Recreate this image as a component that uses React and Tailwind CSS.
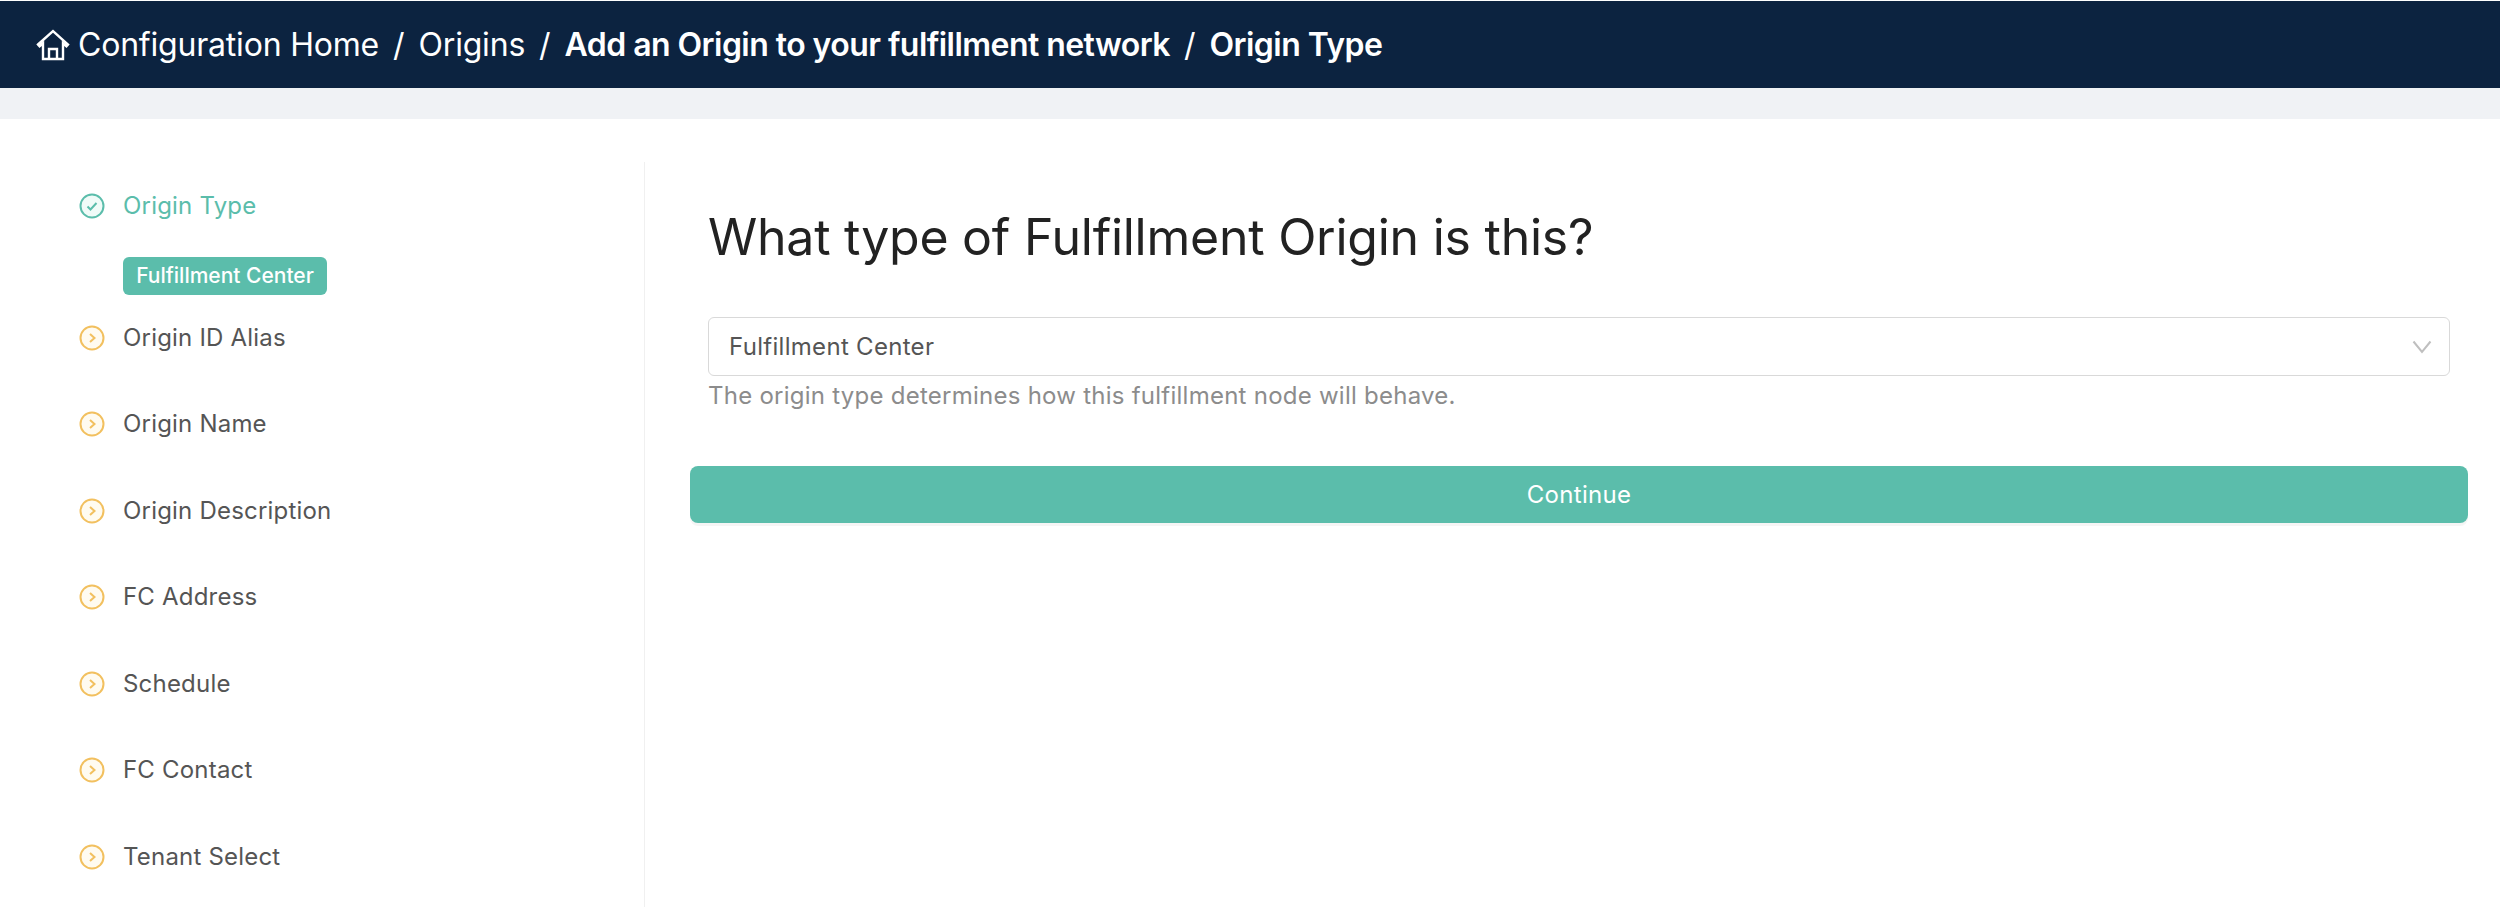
import React from 'react';

const FONT = 'font-["Inter",sans-serif]';

const STEPS = ['Origin ID Alias', 'Origin Name', 'Origin Description', 'FC Address', 'Schedule', 'FC Contact', 'Tenant Select'];

const HomeIcon = () => (
  <svg width="34" height="32" viewBox="0 0 34 32" fill="none" stroke="#fff" strokeWidth="2.4" strokeLinejoin="miter">
    <path d="M2 15.5 17 2l15 13.5-1.6 1.8-3.4-3V30H7V14.300l-3.400 3z" />
    <path d="M13 30V20h8v10" />
  </svg>
);

const StepIcon = ({ done }) => (
  <svg width="26" height="26" viewBox="0 0 26 26" fill="none" className="shrink-0">
    <circle cx="13" cy="13" r="11.500" fill={done ? '#f0fbf8' : '#fffbf0'} stroke={done ? '#5bbdab' : '#f2c05f'} strokeWidth="2" />
    {done ? (
      <path d="M8.500 13.500l3 3 6-6.500" stroke="#5bbdab" strokeWidth="2" />
    ) : (
      <path d="M11 9l4.500 4-4.500 4" stroke="#f2c05f" strokeWidth="2" />
    )}
  </svg>
);

const SelectArrow = () => (
  <svg width="20" height="14" viewBox="0 0 20 14" fill="none" stroke="#bfbfbf" strokeWidth="2">
    <path d="M1.500 1.500 10 12l8.500-10.500" />
  </svg>
);

const Sep = () => <span className="mx-[14px] font-normal tracking-normal">/</span>;

export default function App() {
  return (
    <div className={`h-[924px] bg-white overflow-hidden ${FONT}`}>
      <header className="h-[87px] mt-px bg-[#0c2340] flex items-center pl-[36px] text-white text-[32px] tracking-[-0.2px]">
        <HomeIcon />
        <span className="ml-[8px]">Configuration Home</span>
        <Sep />
        <span>Origins</span>
        <Sep />
        <span className="font-semibold tracking-[-0.55px]">Add an Origin to your fulfillment network</span>
        <Sep />
        <span className="font-semibold tracking-[-0.55px]">Origin Type</span>
      </header>
      <div className="h-[31px] bg-[#f0f2f5]" />

      <div className="flex mt-[43px]">
        <aside className="w-[645px] h-[745px] shrink-0 border-r border-[#f0f0f0] pl-[79px] pt-[31px]">
          <div className="flex items-center gap-[18px] h-[26px] text-[24px] tracking-[0.2px] text-[#5bbdab]">
            <StepIcon done />
            <span>Origin Type</span>
          </div>
          <div className="ml-[44px] mt-[38px] w-[204px] h-[38px] rounded-[6px] bg-[#5bbdab] text-white text-[21px] font-medium flex items-center justify-center">
            Fulfillment Center
          </div>
          <div className="mt-[29.500px] flex flex-col gap-[60.500px]">
            {STEPS.map((step) => (
              <div key={step} className="flex items-center gap-[18px] h-[26px] text-[24px] tracking-[0.2px] text-[#555]">
                <StepIcon />
                <span>{step}</span>
              </div>
            ))}
          </div>
        </aside>

        <main className="flex-1 pl-[45px] pr-[32px]">
          <h1 className="ml-[18px] mt-[45px] text-[50px] leading-[60px] text-[#222] tracking-[-0.25px]">
            What type of Fulfillment Origin is this?
          </h1>
          <div className="ml-[18px] mr-[18px] mt-[50px] h-[59px] rounded-[6px] border border-[#d9d9d9] flex items-center justify-between pl-[20px] pr-[17px] text-[24px] tracking-[0.3px] text-[#555]">
            <span>Fulfillment Center</span>
            <SelectArrow />
          </div>
          <p className="ml-[18px] mt-[2px] text-[24px] leading-[36px] tracking-[0.25px] text-[#8c8c8c]">
            The origin type determines how this fulfillment node will behave.
          </p>
          <button className="block w-full mt-[52px] h-[57px] rounded-[8px] bg-[#5bbdab] text-white text-[24px] tracking-[0.3px] shadow-[0_3px_0_rgba(0,0,0,0.04)]">
            Continue
          </button>
        </main>
      </div>
    </div>
  );
}
